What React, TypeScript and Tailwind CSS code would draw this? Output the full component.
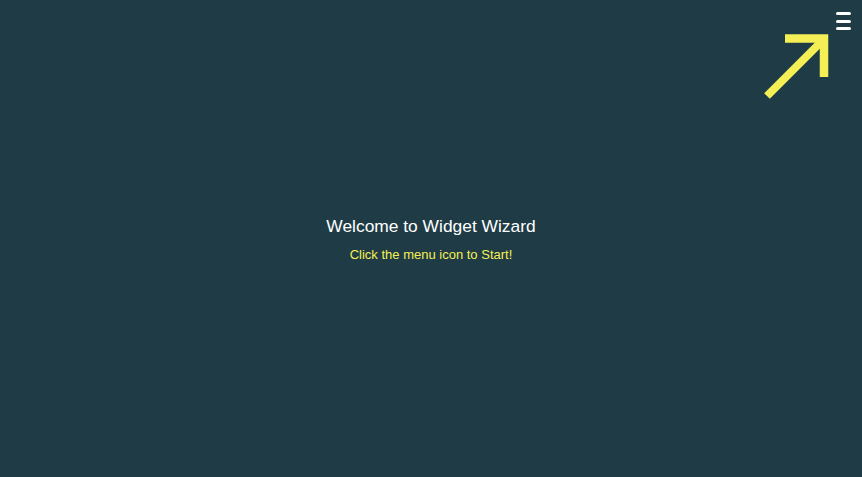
import React from "react";

export default function App() {
  return (
    <div
      className="relative w-full h-[477px] bg-[#1f3c46] flex flex-col items-center justify-center overflow-hidden"
      style={{ fontFamily: '"Liberation Sans", Arial, sans-serif' }}
    >
      <button className="absolute top-[11px] right-[11px] w-[15px] h-[20px] flex flex-col justify-between py-[1px]">
        <span className="block h-[3px] w-[15px] rounded-full bg-white" />
        <span className="block h-[3px] w-[15px] rounded-full bg-white" />
        <span className="block h-[3px] w-[15px] rounded-full bg-white" />
      </button>
      <svg
        className="absolute top-0 left-0 pointer-events-none"
        width="862"
        height="477"
        viewBox="0 0 862 477"
      >
        <polyline
          points="785,38.5 824,38.5 824,77"
          fill="none"
          stroke="#f4ef55"
          strokeWidth="8.5"
          strokeLinejoin="miter"
          strokeLinecap="butt"
        />
        <line
          x1="823"
          y1="40"
          x2="767"
          y2="96"
          stroke="#f4ef55"
          strokeWidth="8"
          strokeLinecap="butt"
        />
      </svg>
      <h1 className="text-white text-[17.4px] leading-[22px]">Welcome to Widget Wizard</h1>
      <p className="text-[#f4ef55] text-[13px] leading-[16px] mt-[10px]">Click the menu icon to Start!</p>
    </div>
  );
}
